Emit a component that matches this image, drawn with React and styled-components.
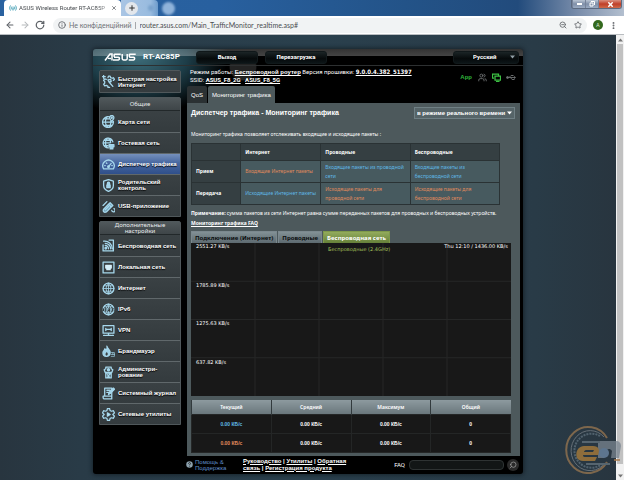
import React from 'react';
import styled, { createGlobalStyle, css } from 'styled-components';
import {
  ArrowLeft, ArrowRight, RotateCw, Info, ZoomOut, Star, MoreVertical, Plus, X, Search, Users,
} from 'lucide-react';

const arial = '"Liberation Sans", Arial, sans-serif';
const noto = '"Noto Sans", sans-serif';
const dejavu = '"DejaVu Sans", Verdana, sans-serif';
const condensed = '"DejaVu Sans Condensed", "DejaVu Sans", sans-serif';
const roboto = 'Roboto, Arial, sans-serif';
const blue = '#5fb8e6';
const orange = '#e08a5c';

const Global = createGlobalStyle`
  *, *::before, *::after { box-sizing: border-box; }
  body { margin: 0; background: #28353f; font-family: ${arial}; }
  button, input, select { font: inherit; margin: 0; padding: 0; border: 0; }
  a { color: inherit; }
`;

const Browser = styled.div`
  display: flex;
  flex-direction: column;
  min-height: 100vh;
`;

/* ---------- browser chrome ---------- */

const TabStrip = styled.div`
  display: flex;
  height: 16px;
  padding-left: 4px;
  background: linear-gradient(90deg, #2a62a0 0%, #28609f 35%, #235388 65%, #224b7c 83%, #7d90ad 93%, #b3bfcf 100%);
`;

const BrowserTab = styled.div`
  display: flex;
  align-items: center;
  width: 117px;
  padding: 0 4px 0 5px;
  background: #fff;
  border-radius: 4px 4px 0 0;
`;

const TabTitle = styled.span`
  flex: 1;
  margin: 0 2px;
  white-space: nowrap;
  font: 6px/8px ${roboto};
  color: #45494d;
  mask-image: linear-gradient(90deg, #000 85%, #0006);
`;

const PlainButton = styled.button`
  display: flex;
  align-items: center;
  justify-content: center;
  background: none;
  color: ${(p) => p.$color || '#5f6368'};
`;

const GlassArea = styled.div`
  display: flex;
  align-items: center;
  gap: 10px;
  width: 37px;
  padding-left: 4px;
  border-radius: 0 4px 0 0;
  background: linear-gradient(90deg, #a9c5e4, #98bbdf 80%, #6d9bcb);
`;

const NewTab = styled(PlainButton)`
  width: 13px;
  height: 13px;
  border-radius: 50%;
  background: #e3e7ec;
  color: #333;
`;

const GlassDot = styled.span`
  align-self: center;
  width: ${(p) => p.$size}px;
  height: ${(p) => p.$size}px;
  margin-left: ${(p) => p.$gap || 0}px;
  border-radius: 50%;
  background: ${(p) => p.$fill};
  filter: blur(1px);
`;

const WindowButtons = styled.div`
  display: flex;
  height: 9px;
  margin: 0 2px 0 auto;
  border: 1px solid #5c6a80;
  border-top: 0;
  border-radius: 0 0 3px 3px;
  overflow: hidden;
`;

const WindowButton = styled.button`
  display: flex;
  align-items: center;
  justify-content: center;
  width: ${(p) => (p.$close ? 23 : 13)}px;
  border-left: 1px solid #76839a;
  background: ${(p) => (p.$close
    ? 'linear-gradient(#d99080, #c03f28 50%, #cd6a4a)'
    : 'linear-gradient(#b9c4d3, #7f8fa8 50%, #9babc2)')};
`;

const AddressBar = styled.div`
  display: flex;
  align-items: center;
  height: 19px;
  padding: 0 6px 0 5px;
  gap: 5px;
  background: #fff;
  border-bottom: 1px solid #b9bdc1;
`;

const Omnibox = styled.div`
  display: flex;
  flex: 1;
  align-items: center;
  height: 15px;
  margin-left: 3px;
  padding: 0 5px;
  border-radius: 8px;
  background: #f1f3f4;
  color: #5f6368;
`;

const SiteNote = styled.span`
  margin: 0 4px 0 3px;
  padding-right: 3px;
  border-right: 1px solid #a5a8ab;
  font: 7px/7px Lato, sans-serif;
  white-space: nowrap;
  color: #6c7074;
`;

const UrlInput = styled.input`
  flex: 1;
  min-width: 0;
  background: none;
  font: 7px/10px Lato, sans-serif;
  color: #4a4d50;
  outline: 0;
`;

const OmniIcons = styled.div`
  display: flex;
  gap: 7px;
`;

const Avatar = styled.button`
  width: 10px;
  height: 10px;
  margin: 0 1px;
  border-radius: 50%;
  background: #33691e;
  color: #e6efe0;
  font: 5px/10px ${arial};
`;

/* ---------- viewport ---------- */

const Viewport = styled.div`
  display: flex;
  flex: 1;
`;

const Scene = styled.main`
  position: relative;
  flex: 1;
  padding: 14px 20px 6px;
  background: linear-gradient(90deg, #28353f, #293b47 13%, #2a404d 50%, #293b47 87%, #28353f);
`;

const ScrollRail = styled.div`
  display: flex;
  flex-direction: column;
  align-items: center;
  width: 8px;
  padding: 3px 0 2px;
  background: #f1f1f1;
  color: #777;
`;

const ScrollThumb = styled.div`
  flex: 1;
  width: 6px;
  margin: 2px 0 10px;
  background: #c1c1c1;
`;

const Watermark = styled.svg`
  position: absolute;
  right: -6px;
  bottom: 6px;
  width: 58px;
  height: 50px;
  opacity: 0.75;
`;

/* ---------- router panel ---------- */

const Panel = styled.section`
  max-width: 430px;
  margin: 0 auto;
  border-radius: 3px;
  background:
    radial-gradient(ellipse 90px 60px at 45px 6px, #3f6f7c 0%, #1d3d48 55%, transparent 100%) no-repeat,
    radial-gradient(circle 14px at 150px 18px, #232323 90%, transparent) no-repeat,
    #000;
  box-shadow: 0 0 4px 1px #17222a;
  color: #fff;
`;

const Header = styled.header`
  display: flex;
  align-items: center;
  height: 17px;
  padding: 0 4px 0 11px;
  border-radius: 3px 3px 0 0;
  border-bottom: 1px solid #2d3031;
  background: linear-gradient(#ffffff33, #ffffff44) no-repeat 0 0 / 100% 7px;
`;

const Model = styled.h1`
  flex: 1;
  margin: 0 0 0 7px;
  font: bold 8px/10px ${roboto};
  white-space: nowrap;
`;

const HeaderButton = styled.button`
  width: 62px;
  height: 13px;
  margin-right: 7px;
  border-radius: 3px;
  border: 1px solid #10181a;
  background: linear-gradient(#1b2426, #060a0b 60%, #0c1517);
  color: #fff;
  font: bold 6px/10px ${roboto};
`;

const LanguageWrap = styled.label`
  display: flex;
  align-items: center;
  width: 66px;
  height: 13px;
  margin-left: 119px;
  padding: 0 3px 0 19px;
  border-radius: 3px;
  border: 1px solid #10181a;
  background: linear-gradient(#1b2426, #060a0b 60%, #0c1517);
  color: #93a1a8;
`;

const BareSelect = styled.select`
  flex: 1;
  min-width: 0;
  appearance: none;
  background: none;
  color: #fff;
  font: bold 6px/10px ${(p) => p.$face};
  outline: 0;
`;

const Columns = styled.div`
  display: grid;
  grid-template-columns: 82px minmax(0, 1fr);
  gap: 6px;
  padding: 0 3px 0 6px;
`;

/* ---------- sidebar ---------- */

const Sidebar = styled.nav`
  display: flex;
  flex-direction: column;
  gap: 4px;
  padding-top: 4px;
`;

const Group = styled.div`
  border: 1px solid #50585b;
  border-radius: 2px 2px 0 0;
  background: #3a4144;
`;

const GroupTitle = styled.h2`
  display: flex;
  align-items: center;
  justify-content: center;
  height: 13px;
  margin: 0;
  border-bottom: 1px solid #22282a;
  background: linear-gradient(#50585b, #3e4548);
  font: 6px/6px ${noto};
  text-align: center;
  color: #e8ecee;
`;

const NavItem = styled.a`
  display: grid;
  grid-template-columns: 13px 1fr;
  align-items: center;
  gap: 3px;
  height: 21px;
  padding-left: 2px;
  text-decoration: none;
  font: bold 6px/6px ${arial};
  color: #fff;
  text-shadow: 0 1px 1px #000;
  background: linear-gradient(#3a4144, #343b3e);
  & + & { border-top: 1px solid #60686b; }
  ${(p) => p.$active && css`background: linear-gradient(#7590bc, #4767a0 45%, #2f4f8b);`}
`;

const NavIcon = styled.svg`
  width: 13px;
  height: 13px;
  fill: none;
  stroke: #a6d7ec;
  stroke-width: 2.4;
  stroke-linecap: round;
  stroke-linejoin: round;
`;

/* ---------- main column ---------- */

const Main = styled.div`
  display: flex;
  flex-direction: column;
`;

const InfoRow = styled.div`
  display: flex;
  justify-content: space-between;
  height: 20px;
  padding: 2px 4px 0 3px;
  font: 6px/8px ${roboto};
  white-space: nowrap;
`;

const BoldLink = styled.a`
  font: bold 6px/8px ${(p) => p.$face || condensed};
  color: #fff;
`;

const Status = styled.div`
  display: flex;
  align-items: center;
  gap: 5px;
  height: 18px;
  color: #6c6f70;
`;

const AppLabel = styled.a`
  margin-right: 1px;
  font: bold 6px/8px ${arial};
  text-decoration: none;
  color: #2fb53a;
`;

const PageTabs = styled.div`
  display: flex;
  gap: 1px;
`;

const PageTab = styled.button`
  height: 17px;
  padding: 0 4px;
  border-radius: 2px 2px 0 0;
  background: ${(p) => (p.$active ? '#4d595c' : '#2b3133')};
  color: #fff;
  font: 6px/8px ${arial};
`;

const Content = styled.div`
  padding: 3px 9px 3px 4px;
  background: #4d595c;
`;

const TitleRow = styled.div`
  display: flex;
  align-items: center;
  justify-content: space-between;
  height: 20px;
  margin-right: -4px;
  padding-bottom: 6px;
`;

const Title = styled.h2`
  margin: 0;
  font: bold 7px/10px ${arial};
`;

const ModeWrap = styled.label`
  display: flex;
  align-items: center;
  width: 101px;
  height: 12px;
  padding: 0 2px;
  border: 1px solid #6f7f84;
  background: #566468;
`;

const Text = styled.p`
  margin: ${(p) => p.$margin || '0'};
  font: 5px/10px ${noto};
  white-space: nowrap;
  color: #fff;
  a, b { font-weight: bold; }
`;

const PacketTable = styled.table`
  width: calc(100% - 11px);
  table-layout: fixed;
  border-collapse: collapse;
  font: 5px/9px ${noto};
  text-align: left;
`;

const PacketHead = styled.th`
  width: ${(p) => p.$width || 'auto'};
  height: ${(p) => (p.$row ? 22 : 17)}px;
  padding: 0 4px;
  border: 1px solid #2a3234;
  background: #353f42;
  font-weight: bold;
`;

const PacketCell = styled.td`
  padding: 0 4px;
  border: 1px solid #2a3234;
  background: #475a5f;
  color: ${(p) => p.$color};
`;

const ChartTabs = styled.div`
  display: flex;
  gap: 1px;
  margin-top: 3px;
`;

const ChartTab = styled.button`
  height: 12px;
  padding: 0 3px;
  border: 1px solid ${(p) => (p.$active ? '#7f9a4a' : '#7b888e')};
  border-bottom: 0;
  background: ${(p) => (p.$active
    ? 'linear-gradient(#93ab5c, #66813a)'
    : 'linear-gradient(#829095, #5d6a70)')};
  color: ${(p) => (p.$active ? '#fff' : '#0a0d0e')};
  font: bold 6px/10px ${noto};
`;

const Chart = styled.svg`
  display: block;
  width: 100%;
  height: 153px;
  background: #181818;
  font: 5px ${dejavu};
  fill: #fff;
  line { stroke: #262727; }
`;

const StatsTable = styled.table`
  width: 100%;
  margin-top: 4px;
  table-layout: fixed;
  border-collapse: collapse;
  background: #181818;
  text-align: center;
`;

const StatHead = styled.th`
  height: 14px;
  padding: 0;
  border-left: 1px solid #323a3d;
  background: linear-gradient(#8d9a9f, #6a777c);
  font: 5px/8px ${noto};
  font-weight: 600;
`;

const StatCell = styled.td`
  height: 19px;
  padding: 0;
  border: 1px solid #242626;
  color: ${(p) => p.$color || '#fff'};
  font: bold 5px/8px ${arial};
`;

const Footer = styled.footer`
  display: flex;
  align-items: center;
  height: 18px;
  padding: 0 4px 0 93px;
`;

const HelpLink = styled.a`
  width: 45px;
  margin-left: 2px;
  font: 6px/6px ${arial};
  text-decoration: none;
  color: #5f8dcb;
`;

const FooterLinks = styled.div`
  flex: 1;
  margin-left: 3px;
  font: bold 6px/7px ${arial};
`;

const FaqLabel = styled.label`
  display: flex;
  align-items: center;
  gap: 4px;
  font: 6px/8px ${roboto};
`;

const FaqInput = styled.input`
  width: 95px;
  height: 10px;
  padding: 0 4px;
  border: 1px solid #2e3333;
  border-radius: 4px;
  background: #121616;
  color: #fff;
`;

const FaqButton = styled(PlainButton)`
  width: 12px;
  height: 12px;
  margin-left: 3px;
  border-radius: 50%;
  background: #2a2a2a;
  svg { transform: scaleX(-1); }
`;

/* ---------- drawings ---------- */

const globe = (
  <>
    <circle cx="12" cy="12" r="10" />
    <path d="M2 12h20M12 2v20M12 2c-6 6-6 14 0 20M12 2c6 6 6 14 0 20M4 7h16M4 17h16" strokeWidth="1.5" />
  </>
);

const icons = {
  wizard: (
    <>
      <path d="M11 5l1-3h3l1 3 3 1 2-1 2 3-2 2M8 8L5 7 3 10l2 2v3l-2 2 2 3 3-1 3 2v2h3" />
      <path d="M13 13l7 8M11 9l2 4 4-1-1-4zM1 3h5M3 1v5" />
    </>
  ),
  map: (
    <>
      <path d="M14 3.500A10 10 0 1 0 21 12M2 13h19M5 7h8M5 19h14M10 3c-5 6-5 14 1 20M12 23c4-4 5-8 4-11" />
      <path d="M18 12c-3-4-4-5-4-7a4 4 0 0 1 8 0c0 2-1 3-4 7z" fill="#3a4144" />
      <circle cx="18" cy="5" r="1" />
    </>
  ),
  guest: (
    <>
      <path d="M12 20A9 9 0 1 1 20 9M2 11h13M4 6h13M4 16h7M10 2c-5 6-5 12 0 18M12 2c3 3 4 6 4 8" />
      <path d="M13 14h9v4h-2v4h-5v-4h-2z" fill="#9fd0e6" />
    </>
  ),
  gauge: (
    <>
      <path d="M3 20a10.500 10.500 0 1 1 18 0z" />
      <path d="M12 16l5-6M5 14h1M8 9l1 1M18 14h1" />
      <circle cx="12" cy="16" r="1.500" fill="#cfe9f5" />
    </>
  ),
  shield: (
    <>
      <path d="M12 1l9 3v8c0 6-4 9-9 11-5-2-9-5-9-11V4z" />
      <path d="M9 11h6v5H9zM10 11V8a2 2 0 0 1 4 0v3" fill="#9fd0e6" />
    </>
  ),
  usb: (
    <>
      <path d="M3 17l9-9 5 5-9 9c-4 2-7-1-5-5zM12 8l3-3 5 5-3 3" fill="#6f9fb5" />
      <path d="M2 10l7-7M18 19a3 3 0 1 0 4-3M6 18l6-6" />
    </>
  ),
  wifi: (
    <>
      <path d="M13 2h8v20H2V11" />
      <circle cx="7" cy="17" r="1.500" fill="#9fd0e6" />
      <path d="M6 12a6 6 0 0 1 6 6M6 8a10 10 0 0 1 10 10M3 4a14 14 0 0 1 16 14" />
    </>
  ),
  lan: (
    <>
      <path d="M2 2h20v20H2z" />
      <path d="M7 8h10v5h-2v3H9v-3H7z" fill="#d5eef8" stroke="#d5eef8" />
    </>
  ),
  globe,
  ipv6: (
    <>
      {globe}
      <path d="M1 10h22v5H1z" fill="#2f393d" stroke="none" />
      <path d="M5 10v5M9 15v-5h2v3H9M15 10l1.500 5 1.500-5M21 12v2" strokeWidth="1.5" />
    </>
  ),
  vpn: (
    <>
      <path d="M2 3h20v14H2zM8 21h8M12 17v4M3 21h3M18 21h3" />
      <path d="M7 8v4M17 8v4M9 10h6" strokeWidth="2.5" />
    </>
  ),
  fire: (
    <>
      <path d="M9 2c1 5 6 6 6 12 0 5-3 7-7 7s-7-3-6-8c1-3 3-3 3-6 2 1 2 2 3 3 1-2 2-5 1-8z" fill="#9fd0e6" />
      <path d="M17 14h6v7h-6M17 17.500h6M20 14v3" strokeWidth="1.200" />
      <path d="M8 20c-3-3-1-5 1-7 2 3 3 5-1 7z" fill="#3a4144" stroke="none" />
    </>
  ),
  admin: (
    <>
      <path d="M7 2h10v3l3 2-2 5H6L4 7l3-2z" />
      <circle cx="12" cy="7" r="2" fill="#9fd0e6" />
      <path d="M7 13h10v9H7zM10 16l2 2 4-5M10 20h4" />
    </>
  ),
  log: (
    <>
      <path d="M5 17V2h13v15M2 17h16v5H4c-2 0-2-3-2-5zM9 6h6M9 10h4" />
      <path d="M12 14l1-4 8-8 2 2-8 8z" fill="#9fd0e6" />
    </>
  ),
  gear: (
    <>
      <path d="M10 1h4l1 4 3 1 3-1 2 4-3 3 3 3-2 4-3-1-3 1-1 4h-4l-1-4-3-1-3 1-2-4 3-3-3-3 2-4 3 1 3-1z" />
      <path d="M10 9l5 3-5 3z" fill="#d5eef8" />
    </>
  ),
};

const AsusLogo = () => (
  <svg width="32" height="8" viewBox="0 0 32 8" fill="none" stroke="#fff" strokeWidth="1.500" role="img" aria-label="ASUS">
    <path d="M1 7.500L6 1h2v6.500M4 5.200l3 .3M10 4.200h4.500c1.300 0 1.300 2.700 0 2.700H9M10.200 1.200h6.500M10.200 1v3M18.200 1v4.600c0 1 .5 1.300 1.300 1.300h2.400c.9 0 1.300-.4 1.300-1.300V1M25.200 4.200h4.500c1.300 0 1.300 2.700 0 2.700h-5M25.200 1.200h6.500M25.400 1v3" />
  </svg>
);

const Caret = ({ up }) => (
  <svg width="5" height="4" viewBox="0 0 5 4" aria-hidden="true">
    <path d={up ? 'M0 3.500L2.500 0.500L5 3.500z' : 'M0 0.500L2.500 3.500L5 0.500z'} fill="currentColor" />
  </svg>
);

const LogoMark = () => (
  <Watermark viewBox="0 0 58 50" fill="none" aria-hidden="true">
    <path d="M43 14A22 23 0 1 0 43 38" stroke="#9a7750" strokeWidth="2" />
    <path d="M40 13A19 20 0 1 0 41 39" stroke="#7b8288" strokeWidth="1" />
    <path d="M36 12A17 17 0 1 0 38 40" stroke="#5f717d" strokeWidth="2" strokeDasharray="2 1" />
    <path d="M34 17h18c3 0 5 2 5 5l-2 12h-8l1-7c-2-3-5-2-6 0l-2 7h-6z" fill="#7a8590" />
    <circle cx="40" cy="29" r="5" fill="#6f8aa8" />
    <path fillRule="evenodd" d="M20 22h9c6 0 7 4 5 9H19c0 2 1 2 3 2h11l-2 4H19c-10 0-8-15 1-15zM20 28h9l1-2h-8c-1 0-2 1-2 2z" fill="#b0803a" />
    <path d="M18 18h18M22 40h24" stroke="#66757f" strokeWidth="2" />
    <path d="M50 36h6" stroke="#a87a4c" strokeWidth="2" />
  </Watermark>
);

/* ---------- data ---------- */

const general = [
  ['map', 'Карта сети'],
  ['guest', 'Гостевая сеть'],
  ['gauge', 'Диспетчер трафика'],
  ['shield', 'Родительский контроль'],
  ['usb', 'USB-приложение'],
];

const advanced = [
  ['wifi', 'Беспроводная сеть'],
  ['lan', 'Локальная сеть'],
  ['globe', 'Интернет'],
  ['ipv6', 'IPv6'],
  ['vpn', 'VPN'],
  ['fire', 'Брандмауэр'],
  ['admin', 'Администри-рование'],
  ['log', 'Системный журнал'],
  ['gear', 'Сетевые утилиты'],
];

const packets = [
  ['Прием', orange, 'Входящие Интернет пакеты', blue, 'Входящие пакеты из проводной сети', 'Входящие пакеты из беспроводной сети'],
  ['Передача', blue, 'Исходящие Интернет пакеты', orange, 'Исходящие пакеты для проводной сети', 'Исходящие пакеты для беспроводной сети'],
];

const levels = [['2551.27 KB/s', 5], ['1785.89 KB/s', 44], ['1275.63 KB/s', 82], ['637.82 KB/s', 121]];

const NavGroup = ({ title, items, active }) => (
  <Group>
    {title && <GroupTitle>{title}</GroupTitle>}
    {items.map(([icon, label]) => (
      <NavItem key={label} href="#" $active={label === active}>
        <NavIcon viewBox="0 0 24 24" aria-hidden="true">{icons[icon]}</NavIcon>
        <span>{label}</span>
      </NavItem>
    ))}
  </Group>
);

const Chrome = () => (
  <>
    <TabStrip>
      <BrowserTab>
        <svg width="8" height="6" viewBox="0 0 16 12" fill="none" stroke="#4aa3b8" strokeWidth="2" aria-hidden="true">
          <path d="M3 1c-2 3-2 7 0 10M6 3c-1 2-1 4 0 6M10 3c1 2 1 4 0 6M13 1c2 3 2 7 0 10M8 5v6" />
        </svg>
        <TabTitle>ASUS Wireless Router RT-AC85P</TabTitle>
        <PlainButton aria-label="Закрыть вкладку"><X size={6} strokeWidth={3} /></PlainButton>
      </BrowserTab>
      <GlassArea>
        <NewTab aria-label="Новая вкладка"><Plus size={8} strokeWidth={3} /></NewTab>
        <GlassDot $size={6} $fill="#7ba3cd" />
      </GlassArea>
      <GlassDot $size={13} $gap={4} $fill="#8fb3da" />
      <WindowButtons>
        <WindowButton aria-label="Свернуть"><svg width="5" height="2"><path d="M0 0h5v2H0z" fill="#fff" /></svg></WindowButton>
        <WindowButton aria-label="Развернуть">
          <svg width="6" height="6" viewBox="0 0 6 6" fill="none" stroke="#fff"><path d="M1 2h3v3H1zM2 .5h3.500V4" /></svg>
        </WindowButton>
        <WindowButton $close aria-label="Закрыть"><X size={7} strokeWidth={5} color="#fff" /></WindowButton>
      </WindowButtons>
    </TabStrip>
    <AddressBar>
      <PlainButton aria-label="Назад"><ArrowLeft size={10} strokeWidth={2.5} /></PlainButton>
      <PlainButton aria-label="Вперед" $color="#b6b9bc"><ArrowRight size={10} strokeWidth={2.5} /></PlainButton>
      <PlainButton aria-label="Обновить"><RotateCw size={10} strokeWidth={3} /></PlainButton>
      <Omnibox>
        <Info size={8} strokeWidth={2.5} />
        <SiteNote>Не конфіденційний</SiteNote>
        <UrlInput aria-label="Адрес" defaultValue="router.asus.com/Main_TrafficMonitor_realtime.asp#" />
        <OmniIcons>
          <PlainButton aria-label="Масштаб"><ZoomOut size={8} strokeWidth={2.5} /></PlainButton>
          <PlainButton aria-label="Закладка"><Star size={8} strokeWidth={2.5} /></PlainButton>
        </OmniIcons>
      </Omnibox>
      <Avatar>A</Avatar>
      <PlainButton aria-label="Меню"><MoreVertical size={9} strokeWidth={3} /></PlainButton>
    </AddressBar>
  </>
);

export default function App() {
  return (
    <Browser>
      <Global />
      <Chrome />
      <Viewport>
        <Scene>
          <Panel>
            <Header>
              <AsusLogo />
              <Model>RT-AC85P</Model>
              <HeaderButton>Выход</HeaderButton>
              <HeaderButton>Перезагрузка</HeaderButton>
              <LanguageWrap>
                <BareSelect $face={roboto} aria-label="Язык"><option>Русский</option></BareSelect>
                <Caret />
              </LanguageWrap>
            </Header>
            <Columns>
              <Sidebar>
                <NavGroup items={[['wizard', 'Быстрая настройка Интернет']]} />
                <NavGroup title="Общие" items={general} active="Диспетчер трафика" />
                <NavGroup title="Дополнительные настройки" items={advanced} />
              </Sidebar>
              <Main>
                <InfoRow>
                  <div>
                    Режим работы: <BoldLink $face={arial} href="#">Беспроводной роутер</BoldLink>
                    {' '}Версия прошивки: <BoldLink href="#">9.0.0.4.382_51397</BoldLink>
                    <br />
                    SSID: <BoldLink $face={roboto} href="#">ASUS_F8_2G</BoldLink>&nbsp;&nbsp; <BoldLink $face={roboto} href="#">ASUS_F8_5G</BoldLink>
                  </div>
                  <Status>
                    <AppLabel href="#">App</AppLabel>
                    <Users size={9} strokeWidth={2.5} />
                    <svg width="9" height="9" viewBox="0 0 18 18" fill="none" stroke="#3cc043" strokeWidth="2.500" aria-hidden="true">
                      <path d="M4 10H1V2h12v3M6 6h11v8H6zM8 17h7" />
                    </svg>
                    <svg width="10" height="7" viewBox="0 0 20 14" fill="none" stroke="currentColor" strokeWidth="1.800" aria-hidden="true">
                      <circle cx="3" cy="7" r="2" fill="currentColor" />
                      <path d="M3 7h14M6 7l4-4h3M9 7l3 4h3" />
                      <path d="M16 4l4 3-4 3zM12 2h3v2h-3zM14 10h3v2h-3z" fill="currentColor" stroke="none" />
                    </svg>
                  </Status>
                </InfoRow>
                <PageTabs>
                  <PageTab>QoS</PageTab>
                  <PageTab $active>Мониторинг трафика</PageTab>
                </PageTabs>
                <Content>
                  <TitleRow>
                    <Title>Диспетчер трафика - Мониторинг трафика</Title>
                    <ModeWrap>
                      <BareSelect $face={arial} aria-label="Режим"><option>в режиме реального времени</option></BareSelect>
                      <Caret />
                    </ModeWrap>
                  </TitleRow>
                  <Text $margin="3px 0 4px">Мониторинг трафика позволяет отслеживать входящие и исходящие пакеты :</Text>
                  <PacketTable>
                    <thead>
                      <tr>
                        <PacketHead $width="16%" aria-label="Направление" />
                        <PacketHead $width="26%">Интернет</PacketHead>
                        <PacketHead>Проводные</PacketHead>
                        <PacketHead>Беспроводные</PacketHead>
                      </tr>
                    </thead>
                    <tbody>
                      {packets.map(([name, netColor, net, color, wired, wireless]) => (
                        <tr key={name}>
                          <PacketHead $row scope="row">{name}</PacketHead>
                          <PacketCell $color={netColor}>{net}</PacketCell>
                          <PacketCell $color={color}>{wired}</PacketCell>
                          <PacketCell $color={color}>{wireless}</PacketCell>
                        </tr>
                      ))}
                    </tbody>
                  </PacketTable>
                  <Text $margin="3px 0 0">
                    <b>Примечание:</b> сумма пакетов из сети Интернет равна сумме переданных пакетов для проводных и беспроводных устройств.
                  </Text>
                  <Text><a href="#">Мониторинг трафика FAQ</a></Text>
                  <ChartTabs>
                    <ChartTab>Подключение (Интернет)</ChartTab>
                    <ChartTab>Проводные</ChartTab>
                    <ChartTab $active>Беспроводная сеть</ChartTab>
                  </ChartTabs>
                  <Chart>
                    {['20%', '40%', '60%', '80%'].map((x) => <line key={x} x1={x} x2={x} y1="0" y2="100%" />)}
                    {['25%', '50%', '75%'].map((y) => <line key={y} x1="0" x2="100%" y1={y} y2={y} />)}
                    {levels.map(([label, y]) => <text key={label} x="5" y={y}>{label}</text>)}
                    <text x="137" y="8" fill="#a5c25a">Беспроводные (2.4GHz)</text>
                    <text x="99%" y="5" textAnchor="end">Thu 12:10 / 1436.00 KB/s</text>
                  </Chart>
                  <StatsTable>
                    <thead>
                      <tr>
                        {['Текущий', 'Средний', 'Максимум', 'Общий'].map((h) => <StatHead key={h}>{h}</StatHead>)}
                      </tr>
                    </thead>
                    <tbody>
                      {[blue, orange].map((color) => (
                        <tr key={color}>
                          <StatCell $color={color}>0.00 КБ/с</StatCell>
                          <StatCell>0.00 КБ/с</StatCell>
                          <StatCell>0.00 КБ/с</StatCell>
                          <StatCell>0</StatCell>
                        </tr>
                      ))}
                    </tbody>
                  </StatsTable>
                </Content>
              </Main>
            </Columns>
            <Footer>
              <svg width="7" height="7" viewBox="0 0 14 14" aria-hidden="true">
                <circle cx="7" cy="7" r="6.500" fill="#8ba0ad" />
                <path d="M5 5.500c0-3 4-3 4-.5 0 1.500-2 1.500-2 3M7 9.500V11" stroke="#111" strokeWidth="1.500" fill="none" />
              </svg>
              <HelpLink href="#">Помощь &amp; Поддержка</HelpLink>
              <FooterLinks>
                <a href="#">Руководство</a> | <a href="#">Утилиты</a> | <a href="#">Обратная<br />связь</a> | <a href="#">Регистрация продукта</a>
              </FooterLinks>
              <FaqLabel>FAQ <FaqInput /></FaqLabel>
              <FaqButton aria-label="Найти" $color="#aaa"><Search size={8} /></FaqButton>
            </Footer>
          </Panel>
          <LogoMark />
        </Scene>
        <ScrollRail>
          <Caret up />
          <ScrollThumb />
          <Caret />
        </ScrollRail>
      </Viewport>
    </Browser>
  );
}
